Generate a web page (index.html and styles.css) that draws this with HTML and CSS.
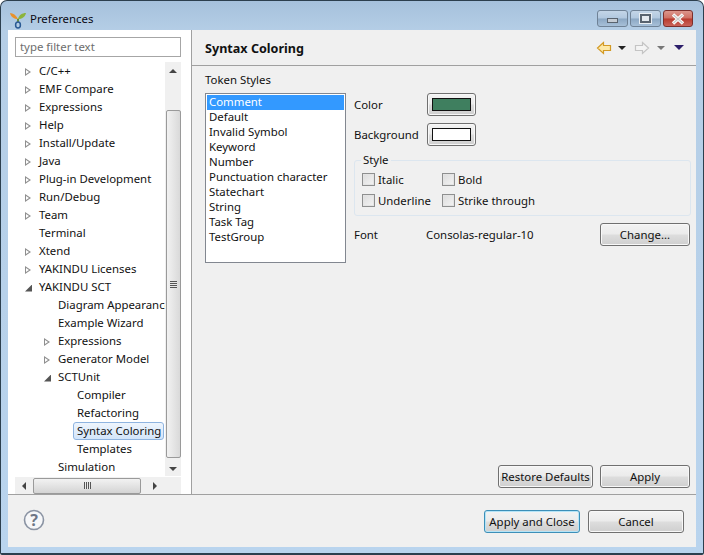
FILE: index.html
```html
<!DOCTYPE html>
<html lang="en">
<head>
    <meta charset="UTF-8">
    <meta name="viewport" content="width=device-width, initial-scale=1.0">
    <title>Preferences</title>
    <link rel="stylesheet" href="styles.css">
</head>
<body>
    <div class="window">
        <div class="title-bar">
            <svg class="logo" width="18" height="20" viewBox="0 0 18 20">
                <path d="M9 10C7 6 4 4 1 4c1 4 4 6 8 6z" fill="#e8912c"/>
                <path d="M9 10c1-4 4-6 8-6-1 4-4 6-8 6z" fill="#8cb43c"/>
                <path d="M8 10h2v3H8z" fill="#6b8f3a"/>
                <ellipse cx="9" cy="16" rx="2.4" ry="3" fill="none" stroke="#2a5a94" stroke-width="1.5"/>
            </svg>
            <span class="title-text">Preferences</span>
            <div class="caption-buttons">
                <div class="caption-btn">
                    <span class="glyph-min"></span>
                </div>
                <div class="caption-btn">
                    <span class="glyph-max"></span>
                </div>
                <div class="caption-btn close">
                    <svg width="16" height="12" viewBox="0 0 16 12">
                        <path d="M3 1.500 13 10.500M13 1.500 3 10.500" stroke="#fff" stroke-width="3.400" fill="none"/>
                        <path d="M3.500 2 12.500 10M12.500 2 3.500 10" stroke="#c9c9c9" stroke-width="1.400" fill="none"/>
                    </svg>
                </div>
            </div>
        </div>
        <div class="client">
            <div class="main">
                <div class="sidebar">
                    <input class="filter" type="text" placeholder="type filter text">
                    <div class="tree-area">
                        <ul class="tree">
                            <li class="row lvl1"><i class="tw"></i>C/C++</li>
                            <li class="row lvl1"><i class="tw"></i>EMF Compare</li>
                            <li class="row lvl1"><i class="tw"></i>Expressions</li>
                            <li class="row lvl1"><i class="tw"></i>Help</li>
                            <li class="row lvl1"><i class="tw"></i>Install/Update</li>
                            <li class="row lvl1"><i class="tw"></i>Java</li>
                            <li class="row lvl1"><i class="tw"></i>Plug-in Development</li>
                            <li class="row lvl1"><i class="tw"></i>Run/Debug</li>
                            <li class="row lvl1"><i class="tw"></i>Team</li>
                            <li class="row lvl1"><i class="tw none"></i>Terminal</li>
                            <li class="row lvl1"><i class="tw"></i>Xtend</li>
                            <li class="row lvl1"><i class="tw"></i>YAKINDU Licenses</li>
                            <li class="row lvl1"><i class="tw open"></i>YAKINDU SCT</li>
                            <li class="row lvl2"><i class="tw none"></i>Diagram Appearance</li>
                            <li class="row lvl2"><i class="tw none"></i>Example Wizard</li>
                            <li class="row lvl2"><i class="tw"></i>Expressions</li>
                            <li class="row lvl2"><i class="tw"></i>Generator Model</li>
                            <li class="row lvl2"><i class="tw open"></i>SCTUnit</li>
                            <li class="row lvl3"><i class="tw none"></i>Compiler</li>
                            <li class="row lvl3"><i class="tw none"></i>Refactoring</li>
                            <li class="row lvl3 current"><i class="tw none"></i><span class="current-label">Syntax Coloring</span></li>
                            <li class="row lvl3"><i class="tw none"></i>Templates</li>
                            <li class="row lvl2"><i class="tw none"></i>Simulation</li>
                        </ul>
                        <div class="vscroll">
                            <span class="arrow up"></span>
                            <div class="vthumb">
                                <span class="grip-h"></span>
                            </div>
                            <span class="arrow down"></span>
                        </div>
                    </div>
                    <div class="hscroll">
                        <span class="arrow left"></span>
                        <div class="hthumb">
                            <span class="grip-v"></span>
                        </div>
                        <span class="arrow right"></span>
                    </div>
                </div>
                <div class="page">
                    <div class="page-head">
                        <h1>Syntax Coloring</h1>
                        <div class="nav-tools">
                            <svg width="16" height="14" viewBox="0 0 16 14">
                                <path d="M7.500 1.500 1.500 7l6 5.500V9.500h7v-5h-7z" fill="#fde9a8" stroke="#d39a25" stroke-width="1.200"/>
                            </svg>
                            <span class="drop"></span>
                            <svg class="nav-fwd" width="16" height="14" viewBox="0 0 16 14">
                                <path d="M8.500 1.500l6 5.500-6 5.500V9.500h-7v-5h7z" fill="#f4f4f4" stroke="#c4c4c4" stroke-width="1.200"/>
                            </svg>
                            <span class="drop gray"></span>
                            <span class="drop menu"></span>
                        </div>
                    </div>
                    <div class="page-body">
                        <div class="token-label">Token Styles</div>
                        <div class="token-row">
                            <ul class="token-list">
                                <li class="selected">Comment</li>
                                <li>Default</li>
                                <li>Invalid Symbol</li>
                                <li>Keyword</li>
                                <li>Number</li>
                                <li>Punctuation character</li>
                                <li>Statechart</li>
                                <li>String</li>
                                <li>Task Tag</li>
                                <li>TestGroup</li>
                            </ul>
                            <div class="props">
                                <div class="prop-row">
                                    <span class="prop-label">Color</span>
                                    <button class="btn swatch-btn"><span class="swatch green"></span></button>
                                </div>
                                <div class="prop-row">
                                    <span class="prop-label">Background</span>
                                    <button class="btn swatch-btn"><span class="swatch white"></span></button>
                                </div>
                                <fieldset class="style-group">
                                    <legend>Style</legend>
                                    <div class="checks">
                                        <label class="check"><i class="box"></i>Italic</label>
                                        <label class="check"><i class="box"></i>Bold</label>
                                        <label class="check"><i class="box"></i>Underline</label>
                                        <label class="check"><i class="box"></i>Strike through</label>
                                    </div>
                                </fieldset>
                                <div class="font-row">
                                    <span class="prop-label font-label">Font</span>
                                    <span class="font-value">Consolas-regular-10</span>
                                    <button class="btn wide">Change...</button>
                                </div>
                            </div>
                        </div>
                    </div>
                    <div class="page-actions">
                        <button class="btn restore">Restore Defaults</button>
                        <button class="btn wide">Apply</button>
                    </div>
                </div>
            </div>
            <div class="footer">
                <svg class="help" width="22" height="22" viewBox="0 0 22 22">
                    <circle cx="11" cy="11" r="9.500" fill="#f6f7f9" stroke="#8a93a3" stroke-width="1.600"/>
                    <text x="11" y="16.500" text-anchor="middle" class="help-mark">?</text>
                </svg>
                <div class="footer-buttons">
                    <button class="btn footer-btn default">Apply and Close</button>
                    <button class="btn footer-btn">Cancel</button>
                </div>
            </div>
        </div>
    </div>
</body>
</html>
```

FILE: styles.css
```css
* {
    box-sizing: border-box;
}

body {
    margin: 0;
    padding: 0;
    width: 704px;
    height: 555px;
    overflow: hidden;
    background: #fff;
    font-family: "Noto Sans", "Open Sans", sans-serif;
    font-size: 11.4px;
    color: #111;
}

.window {
    width: 704px;
    height: 555px;
    display: flex;
    flex-direction: column;
    padding: 0 7px 6px 7px;
    border: 1px solid #2c3f4e;
    border-radius: 7px 7px 2px 2px;
    border-bottom-width: 2px;
    background: linear-gradient(180deg, #a6c1dc 0, #b5cee6 30px, #b9d4ee 100%);
}

.title-bar {
    height: 29px;
    flex: none;
    display: flex;
    align-items: center;
    padding-top: 6px;
}

.logo {
    margin: 0 3px 0 1px;
}

.title-text {
    color: #0a0a14;
}

.caption-buttons {
    margin-left: auto;
    margin-right: 3px;
    display: flex;
    gap: 2px;
    align-self: flex-start;
    margin-top: 3px;
}

.caption-btn {
    width: 31px;
    height: 17px;
    border: 1px solid #6f8296;
    border-radius: 3px;
    background: linear-gradient(180deg, #c3d5e7 0, #b1c8df 48%, #8ba7c3 52%, #a7c0d8 100%);
    display: flex;
    align-items: center;
    justify-content: center;
}

.caption-btn.close {
    width: 30px;
    border-color: #7c2f2c;
    background: linear-gradient(180deg, #dc968c 0, #cf6f63 48%, #b83a2e 52%, #c9635a 100%);
}

.glyph-min {
    width: 11px;
    height: 5px;
    margin-top: 4px;
    background: #c5ccd4;
    border: 1px solid #59636e;
}

.glyph-max {
    width: 11px;
    height: 9px;
    background: #e4e9ee;
    border: 2px solid #59636e;
    outline: 1px solid #e8edf2;
}

.client {
    flex: 1;
    display: flex;
    flex-direction: column;
    background: #f0f0f0;
}

.main {
    flex: 1;
    display: flex;
    border-bottom: 1px solid #a0a0a0;
}

.sidebar {
    width: 184px;
    flex: none;
    padding: 7px 10px 0 7px;
    background: #fff;
    border-right: 1px solid #a0a0a0;
    display: flex;
    flex-direction: column;
}

.filter {
    width: 166px;
    height: 20px;
    flex: none;
    padding: 0 4px 2px;
    border: 1px solid #a6a6a6;
    font: inherit;
    outline: none;
}

.filter::placeholder {
    color: #6d6d6d;
    opacity: 1;
}

.tree-area {
    margin-top: 5px;
    width: 166px;
    flex: 1;
    display: flex;
    min-height: 0;
}

.tree {
    list-style: none;
    margin: 0;
    padding: 0;
    width: 150px;
    overflow: hidden;
}

.row {
    height: 18px;
    line-height: 16px;
    display: flex;
    align-items: center;
    white-space: nowrap;
}

.lvl1 {
    padding-left: 10px;
}

.lvl2 {
    padding-left: 29px;
}

.lvl3 {
    padding-left: 48px;
}

.tw {
    flex: none;
    width: 14px;
    height: 9px;
    margin-top: 2px;
    position: relative;
}

.tw::before {
    content: "";
    position: absolute;
    left: 0;
    top: 0;
    border-left: 6px solid #8f8f8f;
    border-top: 4.500px solid transparent;
    border-bottom: 4.500px solid transparent;
}

.tw::after {
    content: "";
    position: absolute;
    left: 1px;
    top: 2px;
    border-left: 3.500px solid #fff;
    border-top: 2.500px solid transparent;
    border-bottom: 2.500px solid transparent;
}

.tw.open::before {
    border: 0;
    left: 0;
    top: 1px;
    width: 7px;
    height: 7px;
    background: #555;
    clip-path: polygon(100% 0, 100% 100%, 0 100%);
}

.tw.open::after,
.tw.none::before,
.tw.none::after {
    display: none;
}

.current-label {
    margin-left: -4px;
    width: 91px;
    height: 18px;
    padding-left: 3px;
    line-height: 15px;
    flex: none;
    border: 1px solid #8fb4e0;
    border-radius: 3px;
    background: linear-gradient(180deg, #eef5fd, #d3e5fa);
}

.vscroll {
    width: 16px;
    flex: none;
    height: 414px;
    background: #f0f0f0;
    display: flex;
    flex-direction: column;
    align-items: center;
}

.vthumb {
    width: 15px;
    height: 348px;
    margin: 37px 0 9px;
    border: 1px solid #9a9a9a;
    border-radius: 2px;
    background: linear-gradient(90deg, #f2f2f2, #d9d9d9);
    display: flex;
    align-items: center;
    justify-content: center;
}

.grip-h {
    width: 7px;
    height: 7px;
    background: repeating-linear-gradient(180deg, #555 0 1px, #e8e8e8 1px 2px);
}

.hscroll {
    width: 166px;
    height: 17px;
    flex: none;
    margin-top: auto;
    background: #f0f0f0;
    display: flex;
    align-items: center;
    padding: 0 24px 0 7px;
}

.hthumb {
    width: 108px;
    height: 16px;
    margin: 0 auto 0 7px;
    border: 1px solid #9a9a9a;
    border-radius: 2px;
    background: linear-gradient(180deg, #f2f2f2, #d4d4d4);
    display: flex;
    align-items: center;
    justify-content: center;
}

.grip-v {
    width: 7px;
    height: 7px;
    background: repeating-linear-gradient(90deg, #555 0 1px, #e8e8e8 1px 2px);
}

.arrow {
    flex: none;
    width: 0;
    height: 0;
    border: 4px solid transparent;
}

.arrow.up {
    border-top: 0;
    border-bottom-color: #444;
    margin-top: 7px;
}

.arrow.down {
    border-bottom: 0;
    border-top-color: #444;
}

.arrow.left {
    border-left: 0;
    border-right-color: #444;
}

.arrow.right {
    border-right: 0;
    border-left-color: #444;
}

.page {
    flex: 1;
    min-width: 0;
    display: flex;
    flex-direction: column;
}

.page-head {
    height: 36px;
    flex: none;
    border-bottom: 1px solid #a0a0a0;
    padding: 2px 12px 0 13px;
    display: flex;
    align-items: center;
    justify-content: space-between;
}

h1 {
    margin: 0;
    font-size: 12.600px;
    font-weight: 700;
    color: #111;
}

.nav-tools {
    display: flex;
    align-items: center;
    margin-top: -2px;
}

.nav-tools .drop {
    margin-left: 6px;
}

.nav-fwd {
    margin-left: 8px;
}

.drop {
    width: 0;
    height: 0;
    border: 4px solid transparent;
    border-bottom: 0;
    border-top: 4px solid #222;
}

.nav-tools .drop.gray {
    border-top-color: #777;
    margin-left: 7px;
}

.nav-tools .drop.menu {
    margin-left: 9px;
    border-width: 5px 5px 0;
    border-top-color: #2c1e6a;
}

.page-body {
    flex: 1;
    padding: 6px 5px 0 13px;
}

.token-label {
    height: 21px;
    line-height: 15px;
}

.token-row {
    display: flex;
    gap: 8px;
}

.token-list {
    list-style: none;
    margin: 0;
    padding: 1px;
    width: 141px;
    height: 170px;
    flex: none;
    background: #fff;
    border: 1px solid #828790;
}

.token-list li {
    height: 15px;
    line-height: 14px;
    padding-left: 2px;
    white-space: nowrap;
}

.token-list .selected {
    background: #3399ff;
    color: #fff;
}

.props {
    flex: 1;
    min-width: 0;
}

.prop-row {
    display: flex;
    align-items: center;
    height: 23px;
    margin-bottom: 7px;
}

.prop-label {
    width: 73px;
    flex: none;
}

.btn {
    height: 23px;
    padding: 0;
    font: inherit;
    color: #111;
    white-space: nowrap;
    border: 1px solid #707070;
    border-radius: 3px;
    background: linear-gradient(180deg, #f3f3f3 0, #ebebeb 48%, #dddddd 52%, #cfcfcf 100%);
    box-shadow: inset 0 0 0 1px #f8f8f8;
}

.swatch-btn {
    width: 49px;
    display: flex;
    align-items: center;
    justify-content: center;
}

.swatch {
    width: 39px;
    height: 13px;
    border: 1px solid #111;
}

.swatch.green {
    background: #3f7f5f;
}

.swatch.white {
    background: #fff;
}

.style-group {
    margin: 0;
    width: 337px;
    height: 63px;
    padding: 0 0 0 7px;
    border: 1px solid #dce6ef;
    border-radius: 3px;
}

.style-group legend {
    padding: 0 2px;
    margin-left: -1px;
    line-height: 14px;
}

.checks {
    display: grid;
    grid-template-columns: 80px 1fr;
    grid-auto-rows: 21px;
    margin-top: 2px;
}

.check {
    display: flex;
    align-items: center;
    gap: 3px;
    white-space: nowrap;
}

.box {
    width: 13px;
    height: 13px;
    flex: none;
    border: 1px solid #8e8f8f;
    background: linear-gradient(135deg, #dcdcdc, #f4f4f4);
    box-shadow: inset 0 0 0 1px #e4e4e4;
}

.font-row {
    margin-top: 7px;
    display: flex;
    align-items: center;
    height: 23px;
    width: 336px;
}

.font-label {
    width: 72px;
}

.wide {
    width: 90px;
}

.font-row .wide {
    margin-left: auto;
}

.page-actions {
    flex: none;
    height: 29px;
    padding-right: 6px;
    display: flex;
    justify-content: flex-end;
    gap: 7px;
}

.restore {
    width: 95px;
}

.footer {
    height: 52px;
    flex: none;
    display: flex;
    align-items: flex-start;
    justify-content: space-between;
    padding: 15px 12px 0 15px;
}

.help {
    margin-top: -1px;
}

.help-mark {
    font-size: 16px;
    font-weight: 700;
    fill: #6d7686;
}

.footer-buttons {
    display: flex;
    gap: 8px;
}

.footer-btn {
    width: 96px;
}

.footer-btn.default {
    border-color: #3c8fb8;
    box-shadow: inset 0 0 0 1px #b5e4f7;
}
```
